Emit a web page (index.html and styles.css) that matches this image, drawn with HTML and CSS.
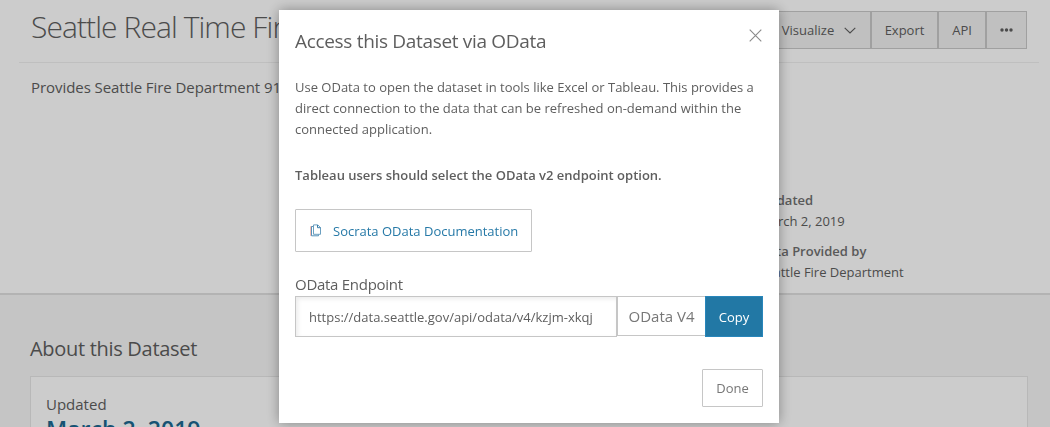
FILE: index.html
```html
<!DOCTYPE html>
<html lang="en">
<head>
<meta charset="utf-8">
<title>Seattle Real Time Fire</title>
<link rel="stylesheet" href="styles.css">
</head>
<body>
<main class="page">
  <section class="intro">
    <header class="header">
      <h1 class="title">Seattle Real Time Fire</h1>
      <div class="actions">
        <button class="action visualize">Visualize
          <svg class="chevron" width="12" height="7" viewBox="0 0 12 7"><path d="M.7 .8 6 6 11.3 .8" fill="none" stroke="currentColor" stroke-width="1.1"/></svg>
        </button>
        <button class="action export">Export</button>
        <button class="action api">API</button>
        <button class="action more" aria-label="More"><svg width="13" height="4" viewBox="0 0 13 4"><g fill="currentColor"><circle cx="2" cy="2" r="1.7"/><circle cx="6.5" cy="2" r="1.7"/><circle cx="11" cy="2" r="1.7"/></g></svg></button>
      </div>
    </header>
    <div class="details">
      <p class="description">Provides Seattle Fire Department 911</p>
      <dl class="facts">
        <dt>Updated</dt>
        <dd>March 2, 2019</dd>
        <dt>Data Provided by</dt>
        <dd>Seattle Fire Department</dd>
      </dl>
    </div>
  </section>
  <section class="about">
    <h2 class="about-title">About this Dataset</h2>
    <div class="card">
      <div class="card-label">Updated</div>
      <div class="card-date">March 2, 2019</div>
    </div>
  </section>
</main>
<div class="overlay">
  <div class="modal" role="dialog" aria-label="Access this Dataset via OData">
    <header class="modal-header">
      <h2 class="modal-title">Access this Dataset via OData</h2>
      <button class="close" aria-label="Close"><svg width="13" height="13" viewBox="0 0 13 13"><path d="M.7 .7 12.3 12.3M12.3 .7 .7 12.3" stroke="currentColor" stroke-width="1.1"/></svg></button>
    </header>
    <p class="copy-text">Use OData to open the dataset in tools like Excel or Tableau. This provides a<br>direct connection to the data that can be refreshed on-demand within the<br>connected application.</p>
    <p class="notice">Tableau users should select the OData v2 endpoint option.</p>
    <a class="docs">
      <svg class="copy-icon" width="12" height="13" viewBox="0 0 12 13" fill="none"><path d="M2.5 2.5H.6v9.4" stroke="#f5b5ad"/><path d="M3 2.5H1.5v9.3h7v-1.3" stroke="#5792b8"/><path d="M3.5.9h4.3l2.7 2.7v6.7h-7z" stroke="#6b9fc0"/><path d="M7.5 1v2.7h3" stroke="#3a7da8"/></svg>
      <span>Socrata OData Documentation</span>
    </a>
    <label class="endpoint-label">OData Endpoint</label>
    <div class="endpoint">
      <div class="url"><span>https://data.seattle.gov/api/odata/v4/kzjm-xkqj</span></div>
      <div class="version"><span>OData V4</span></div>
      <button class="copy">Copy</button>
    </div>
    <footer class="modal-footer"><button class="done">Done</button></footer>
  </div>
</div>
</body>
</html>
```
FILE: styles.css
```css
* { box-sizing: border-box; }
html, body { height: 100%; overflow: hidden; }
body { margin: 0; font-family: "Open Sans", sans-serif; font-size: 13px; color: #5e5e5e; }
h1, h2, p, dl, dd { margin: 0; font-weight: 400; }
button { font: inherit; color: inherit; padding: 0; margin: 0; white-space: nowrap; }
svg { display: block; flex: none; }

.page { background: #fff; height: 100%; display: flex; flex-direction: column; overflow: hidden; }
.intro { flex: none; height: 295px; border-bottom: 2px solid #e0e0e0; padding: 0 11px 0 19px; }
.header { height: 63px; padding: 6px 12px 0; display: flex; justify-content: space-between; align-items: flex-start; border-bottom: 1px solid #efefef; }
.title { font-size: 30px; line-height: 41px; font-weight: 300; letter-spacing: -.92px; white-space: nowrap; }
.actions { display: flex; margin-top: 5px; }
.action { height: 38px; border: 1px solid #c8c8c8; background: #f0f0f0; display: flex; align-items: center; justify-content: center; }
.visualize { width: 106px; gap: 10px; padding-left: 2px; }
.export { width: 67px; }
.api { width: 48px; }
.more { width: 41px; }
.details { display: flex; justify-content: space-between; padding: 0 12px; }
.description { font-size: 15px; line-height: 20px; padding-top: 14px; letter-spacing: -.06px; white-space: nowrap; }
.facts { width: 268px; padding-top: 127px; line-height: 21px; }
.facts dt { font-weight: 600; color: #707070; }
.facts dd { margin-bottom: 9px; }
.about { background: #f7f7f7; flex: 1; min-height: 0; padding: 40px 22px 0 30px; }
.about-title { font-size: 20px; line-height: 28px; letter-spacing: -.3px; }
.card { margin-top: 13px; height: 120px; border: 1px solid #e6e6e6; background: #fff; padding: 17px 15px; }
.card-label { font-size: 15px; line-height: 20px; }
.card-date { font-size: 23px; line-height: 31px; font-weight: 600; color: #1c6890; }

.overlay { position: fixed; inset: 0; background: rgba(0, 0, 0, .2); display: flex; justify-content: center; align-items: flex-start; padding: 10px 0 0 8px; }
.modal { width: 500px; height: 413px; background: #fff; padding: 0 16px; box-shadow: 0 0 12px rgba(0, 0, 0, .35); display: flex; flex-direction: column; }
.modal-header { display: flex; justify-content: space-between; height: 67px; }
.modal-title { font-size: 19px; line-height: 28px; margin-top: 17px; letter-spacing: -.32px; }
.close { border: 0; background: none; color: #8a8a8a; height: 13px; margin: 19px 1px 0 0; }
.copy-text { line-height: 21px; white-space: nowrap; }
.notice { line-height: 21px; font-weight: 600; margin-top: 25px; }
.docs { margin-top: 23px; width: 237px; height: 43px; border: 1px solid #c6c6c6; border-radius: 1px; color: #2679a7; display: flex; align-items: center; gap: 11px; padding-left: 14px; white-space: nowrap; }
.endpoint-label { font-size: 15px; line-height: 22px; margin-top: 21px; margin-bottom: 1px; letter-spacing: -.28px; }
.endpoint { display: flex; align-items: flex-start; white-space: nowrap; }
.url { width: 322px; height: 41px; border: 1px solid #c6c6c6; box-shadow: inset 2px 2px 4px rgba(0, 0, 0, .08); padding-left: 13px; line-height: 41px; }
.version { width: 88px; height: 40px; border: 1px solid #c6c6c6; border-right: 0; color: #777; font-size: 15px; line-height: 39px; text-align: center; }
.copy { width: 58px; height: 41px; border: 1px solid #2886bb; background: #2278a5; color: #fff; }
.modal-footer { display: flex; justify-content: flex-end; margin-top: 32px; }
.done { width: 61px; height: 38px; border: 1px solid #c6c6c6; border-radius: 1px; background: #fff; color: #777; }
```
